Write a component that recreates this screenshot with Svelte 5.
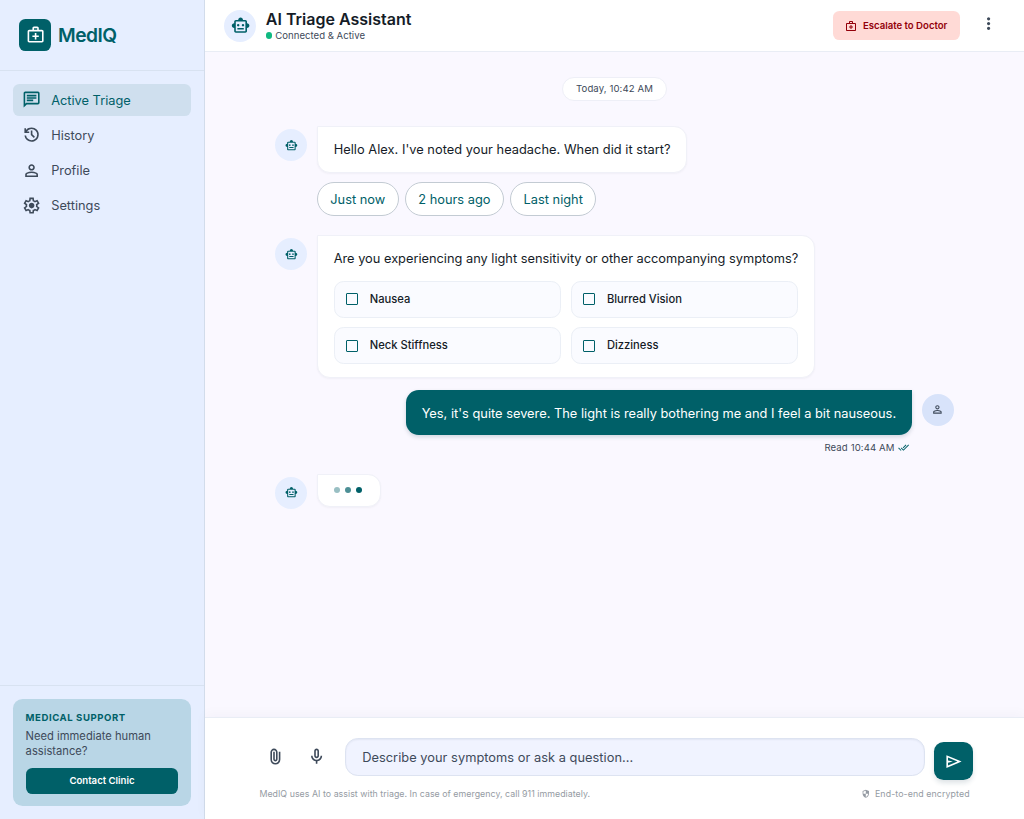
<script>
	const icons = {
		medical:
			'M4 22q-.825 0-1.412-.587T2 20V8q0-.825.588-1.412T4 6h4V4q0-.825.588-1.412T10 2h4q.825 0 1.413.588T16 4v2h4q.825 0 1.413.588T22 8v12q0 .825-.587 1.413T20 22zm0-2h16V8H4zm6-14h4V4h-4zm1 9v3h2v-3h3v-2h-3v-3h-2v3H8v2z',
		chat: 'M4 4h16v12H5.17L4 17.17V4m0-2c-1.1 0-1.99.9-1.99 2L2 22l4-4h14c1.1 0 2-.9 2-2V4c0-1.1-.9-2-2-2H4zm2 10h8v2H6v-2zm0-3h12v2H6V9zm0-3h12v2H6V6z',
		history:
			'M12 21q-3.45 0-6.01-2.29T3.05 13H5.1q.35 2.6 2.31 4.3T12 19q2.93 0 4.96-2.04T19 12t-2.04-4.96T12 5q-1.73 0-3.23.8T6.25 8H9v2H3V4h2v2.35q1.28-1.6 3.11-2.48T12 3q1.88 0 3.51.71t2.85 1.93 1.93 2.85T21 12t-.71 3.51-1.93 2.85-2.85 1.93T12 21m2.8-4.8L11 12.4V7h2v4.6l3.2 3.2z',
		person:
			'M12 12q-1.65 0-2.825-1.175T8 8t1.175-2.825T12 4t2.825 1.175T16 8t-1.175 2.825T12 12m-8 8v-2.8q0-.85.438-1.562T5.6 14.55q1.55-.775 3.15-1.162T12 13t3.25.388 3.15 1.162q.725.375 1.163 1.088T20 17.2V20zm2-2h12v-.8q0-.275-.137-.5t-.363-.35q-1.35-.675-2.725-1.012T12 15t-2.775.338T6.5 16.35q-.225.125-.363.35T6 17.2zm6-8q.825 0 1.413-.587T14 8t-.587-1.412T12 6t-1.412.588T10 8t.588 1.413T12 10',
		settings:
			'm9.25 22-.4-3.2q-.325-.125-.612-.3t-.563-.375L4.7 19.375l-2.75-4.75 2.575-1.95Q4.5 12.5 4.5 12.338v-.675q0-.163.025-.338L1.95 9.375l2.75-4.75 2.975 1.25q.275-.2.575-.375t.6-.3l.4-3.2h5.5l.4 3.2q.325.125.613.3t.562.375l2.975-1.25 2.75 4.75-2.575 1.95q.025.175.025.338v.674q0 .163-.05.338l2.575 1.95-2.75 4.75-2.95-1.25q-.275.2-.575.375t-.6.3l-.4 3.2zM11 20h1.975l.35-2.65q.775-.2 1.438-.587t1.212-.938l2.475 1.025.975-1.7-2.15-1.625q.125-.35.175-.737T17.5 12t-.05-.787-.175-.738l2.15-1.625-.975-1.7-2.475 1.05q-.55-.575-1.212-.962t-1.438-.588L13 4h-1.975l-.35 2.65q-.775.2-1.437.588t-1.213.937L5.55 7.15l-.975 1.7 2.15 1.6q-.125.375-.175.75t-.05.8q0 .4.05.775t.175.75l-2.15 1.625.975 1.7 2.475-1.05q.55.575 1.213.963t1.437.587zm1.05-4.5q1.45 0 2.475-1.025T15.55 12t-1.025-2.475T12.05 8.5q-1.475 0-2.487 1.025T8.55 12t1.013 2.475T12.05 15.5',
		robot: 'M4 15q-1.25 0-2.125-.875T1 12t.875-2.125T4 9V7q0-.825.588-1.412T6 5h3q0-1.25.875-2.125T12 2t2.125.875T15 5h3q.825 0 1.413.588T20 7v2q1.25 0 2.125.875T23 12t-.875 2.125T20 15v4q0 .825-.587 1.413T18 21H6q-.825 0-1.412-.587T4 19zm5-2q.625 0 1.063-.437T10.5 11.5t-.437-1.062T9 10t-1.062.438T7.5 11.5t.438 1.063T9 13m6 0q.625 0 1.063-.437T16.5 11.5t-.437-1.062T15 10t-1.062.438T13.5 11.5t.438 1.063T15 13m-7 4h8v-2H8zm-2 2h12V7H6z',
		more: 'M12 20q-.825 0-1.412-.587T10 18t.588-1.412T12 16t1.413.588T14 18t-.587 1.413T12 20m0-6q-.825 0-1.412-.587T10 12t.588-1.412T12 10t1.413.588T14 12t-.587 1.413T12 14m0-6q-.825 0-1.412-.587T10 6t.588-1.412T12 4t1.413.588T14 6t-.587 1.413T12 8',
		doneAll:
			'M18 7l-1.41-1.41-6.34 6.34 1.41 1.41L18 7zm4.24-1.41L11.66 16.17 7.48 12l-1.41 1.41L11.66 19l12-12-1.42-1.41zM.41 13.41 6 19l1.41-1.41L1.83 12 .41 13.41z',
		attach:
			'M18 15.75q0 2.6-1.825 4.425T11.75 22t-4.425-1.825T5.5 15.75V6.5q0-1.875 1.313-3.187T10 2t3.188 1.313T14.5 6.5v8.75q0 1.15-.8 1.95t-1.95.8-1.95-.8-.8-1.95V6h2v9.25q0 .325.213.538t.537.212.538-.213.212-.537V6.5q-.025-1.05-.737-1.775T10 4t-1.775.725T7.5 6.5v9.25q-.025 1.775 1.225 3.013T11.75 20q1.75 0 2.975-1.237T16 15.75V6h2z',
		mic: 'M12 14q-1.25 0-2.125-.875T9 11V5q0-1.25.875-2.125T12 2t2.125.875T15 5v6q0 1.25-.875 2.125T12 14m-1 7v-3.075q-2.6-.35-4.3-2.325T5 11h2q0 2.075 1.463 3.538T12 16t3.538-1.463T17 11h2q0 2.625-1.7 4.6T13 17.925V21zm1-9q.425 0 .713-.288T13 11V5q0-.425-.288-.712T12 4t-.712.288T11 5v6q0 .425.288.713T12 12',
		send: 'M3 20V4l19 8zm2-3 11.85-5L5 7v3.5l6 1.5-6 1.5z',
		shield: 'M12 22q-3.475-.875-5.738-3.988T4 11.1V5l8-3 8 3v6.1q0 3.8-2.262 6.913T12 22m0-2.1q2.425-.75 4.05-2.963T17.95 12H12V4.125l-6 2.25v5.175q0 .175.05.45H12z'
	};

	const nav = [
		{ label: 'Active Triage', icon: 'chat' },
		{ label: 'History', icon: 'history' },
		{ label: 'Profile', icon: 'person' },
		{ label: 'Settings', icon: 'settings' }
	];
	const replies = ['Just now', '2 hours ago', 'Last night'];
	const symptoms = ['Nausea', 'Blurred Vision', 'Neck Stiffness', 'Dizziness'];

	let active = $state('Active Triage');
	let checked = $state({});
	let message = $state('');
</script>

{#snippet icon(name, size)}
	<svg class="icon" width={size} height={size} viewBox="0 0 24 24" aria-hidden="true">
		<path d={icons[name]} />
	</svg>
{/snippet}

<div class="app">
	<aside class="sidebar">
		<div class="brand">
			<span class="logo">{@render icon('medical', 19.2)}</span>
			<span class="brand-name">MedIQ</span>
		</div>
		<nav>
			{#each nav as item}
				<button class="nav-item" class:active={active === item.label} onclick={() => (active = item.label)}>
					{@render icon(item.icon, 19.2)}
					<span>{item.label}</span>
				</button>
			{/each}
		</nav>
		<div class="sidebar-footer">
			<div class="support">
				<h2>MEDICAL SUPPORT</h2>
				<p>Need immediate human assistance?</p>
				<button class="contact">Contact Clinic</button>
			</div>
		</div>
	</aside>

	<main>
		<header>
			<span class="avatar large">{@render icon('robot', 19.2)}</span>
			<div class="heading">
				<h1>AI Triage Assistant</h1>
				<p class="status"><span class="status-dot"></span>Connected & Active</p>
			</div>
			<button class="escalate">{@render icon('medical', 12)}Escalate to Doctor</button>
			<button class="more" aria-label="More options">{@render icon('more', 19.2)}</button>
		</header>

		<section class="chat">
			<div class="date">Today, 10:42 AM</div>

			<div class="row first">
				<span class="avatar">{@render icon('robot', 12.8)}</span>
				<div class="stack">
					<div class="bubble greeting">Hello Alex. I've noted your headache. When did it start?</div>
					<div class="replies">
						{#each replies as reply}
							<button class="chip">{reply}</button>
						{/each}
					</div>
				</div>
			</div>

			<div class="row second">
				<span class="avatar">{@render icon('robot', 12.8)}</span>
				<div class="bubble question">
					<p>Are you experiencing any light sensitivity or other accompanying symptoms?</p>
					<div class="options">
						{#each symptoms as symptom}
							<label class="option">
								<input type="checkbox" bind:checked={checked[symptom]} />
								<span>{symptom}</span>
							</label>
						{/each}
					</div>
				</div>
			</div>

			<div class="row user">
				<div class="stack end">
					<div class="bubble mine">
						Yes, it's quite severe. The light is really bothering me and I feel a bit nauseous.
					</div>
					<div class="read">Read 10:44 AM {@render icon('doneAll', 11.2)}</div>
				</div>
				<span class="avatar me">{@render icon('person', 12.8)}</span>
			</div>

			<div class="row typing-row">
				<span class="avatar">{@render icon('robot', 12.8)}</span>
				<div class="bubble typing"><i></i><i></i><i></i></div>
			</div>
		</section>

		<footer>
			<div class="composer">
				<button class="tool" aria-label="Attach file">{@render icon('attach', 19.2)}</button>
				<button class="tool mic" aria-label="Voice input">{@render icon('mic', 19.2)}</button>
				<input
					class="message"
					type="text"
					placeholder="Describe your symptoms or ask a question..."
					bind:value={message}
				/>
				<button class="send" aria-label="Send">{@render icon('send', 19.2)}</button>
			</div>
			<div class="notes">
				<span>MedIQ uses AI to assist with triage. In case of emergency, call 911 immediately.</span>
				<span class="secure">{@render icon('shield', 9.6)}End-to-end encrypted</span>
			</div>
		</footer>
	</main>
</div>

<style>
	:global(body) {
		margin: 0;
		overflow: hidden;
	}

	.app {
		display: flex;
		height: 819px;
		font-family: Inter, 'Liberation Sans', sans-serif;
		font-size: 12.8px;
		line-height: 19.2px;
		color: #151c27;
		background: #faf8ff;
	}

	.app * {
		box-sizing: border-box;
	}

	h1,
	h2,
	p {
		margin: 0;
	}

	button {
		display: flex;
		align-items: center;
		padding: 0;
		border: 0;
		background: none;
		font: inherit;
		color: inherit;
		white-space: nowrap;
		cursor: pointer;
	}

	.icon {
		display: block;
		flex: none;
		fill: currentColor;
	}

	/* Sidebar */
	.sidebar {
		display: flex;
		flex-direction: column;
		width: 205px;
		flex: none;
		background: #e6eeff;
		border-right: 1px solid #d2dceb;
	}

	.brand {
		display: flex;
		align-items: center;
		gap: 6.8px;
		height: 71px;
		padding: 0 19.2px;
		border-bottom: 1px solid #d8e2f1;
	}

	.logo {
		display: grid;
		place-items: center;
		width: 32px;
		height: 32px;
		border-radius: 6.4px;
		background: #006068;
		color: #fff;
	}

	.brand-name {
		padding-top: 1px;
		font-size: 19.2px;
		font-weight: 600;
		letter-spacing: -0.5px;
		color: #006068;
	}

	nav {
		display: flex;
		flex-direction: column;
		gap: 3.2px;
		padding: 12.8px;
		flex: 1;
	}

	.nav-item {
		gap: 9.6px;
		height: 32px;
		padding: 0 9.6px;
		border-radius: 6.4px;
		color: #3e4a5a;
	}

	.nav-item span {
		padding-top: 1.2px;
	}

	.nav-item.active {
		background: #cfdfee;
		color: #006068;
	}

	.sidebar-footer {
		padding: 12.8px;
		border-top: 1px solid #d8e2f1;
	}

	.support {
		height: 107px;
		padding: 12.8px;
		border-radius: 9.6px;
		background: #b9d6e6;
	}

	.support h2 {
		font-size: 9.6px;
		line-height: 12.8px;
		font-weight: 700;
		letter-spacing: 0.55px;
		color: #006068;
	}

	.support p {
		margin: 4px 0 8.4px;
		font-size: 11.2px;
		line-height: 15.4px;
		color: #3e4a5a;
	}

	.contact {
		justify-content: center;
		width: 100%;
		height: 25.6px;
		padding-bottom: 1px;
		border-radius: 6.4px;
		background: #006068;
		color: #fff;
		font-size: 9.6px;
		font-weight: 600;
	}

	/* Header */
	main {
		display: flex;
		flex-direction: column;
		flex: 1;
		min-width: 0;
	}

	header {
		display: flex;
		align-items: center;
		height: 52px;
		padding: 0 25.6px 0 19.2px;
		background: #fff;
		border-bottom: 1px solid #e9edf5;
	}

	.avatar {
		display: grid;
		place-items: center;
		width: 32px;
		height: 32px;
		flex: none;
		margin-top: 3.2px;
		border-radius: 50%;
		background: #e6eeff;
		color: #006068;
	}

	.avatar.large {
		margin: 0 9.6px 0 0;
	}

	.heading {
		flex: 1;
	}

	h1 {
		font-size: 16px;
		line-height: 20px;
		font-weight: 600;
	}

	.status {
		display: flex;
		align-items: center;
		gap: 3.2px;
		font-size: 9.6px;
		line-height: 14px;
		color: #3e4a5a;
	}

	.status-dot {
		width: 6.4px;
		height: 6.4px;
		border-radius: 50%;
		background: #10b981;
	}

	.escalate {
		gap: 6px;
		height: 29px;
		padding: 0 12.8px 0 12.4px;
		border-radius: 6.4px;
		background: #ffdad6;
		color: #93000a;
		font-size: 9.6px;
		font-weight: 600;
	}

	.more {
		margin: -4px 0 0 19px;
		color: #3e4a5a;
	}

	/* Conversation */
	.chat {
		display: flex;
		flex-direction: column;
		flex: 1;
		width: 678.4px;
		margin: 0 auto;
		padding-top: 25px;
	}

	.date {
		align-self: center;
		padding: 0 12.8px;
		border: 1px solid #eeeff7;
		border-radius: 12px;
		background: #fff;
		font-size: 9.6px;
		line-height: 22px;
		letter-spacing: 0.1px;
		color: #3e4a5a;
	}

	.row {
		display: flex;
		align-items: flex-start;
		gap: 9.6px;
	}

	.first {
		margin-top: 25.2px;
	}

	.second {
		margin-top: 19.2px;
	}

	.bubble {
		width: fit-content;
		padding: 12.8px 15.8px;
		border: 1px solid #f0f1f8;
		border-radius: 0 12.8px 12.8px 12.8px;
		background: #fff;
		box-shadow: 0 1px 2px rgba(20, 30, 60, 0.04);
		white-space: nowrap;
	}

	.greeting {
		letter-spacing: 0.035px;
	}

	.replies {
		display: flex;
		gap: 6.4px;
		margin-top: 8.8px;
	}

	.chip {
		height: 34px;
		padding: 1px 12.4px 0;
		border: 1px solid #c3cbd3;
		border-radius: 17px;
		background: #fff;
		color: #006068;
	}

	.options {
		display: grid;
		grid-template-columns: 1fr 1fr;
		gap: 9.6px;
		margin-top: 12.8px;
	}

	.option {
		display: flex;
		align-items: center;
		gap: 11.5px;
		height: 36.8px;
		padding: 0 11.6px;
		border: 1px solid #ebeff6;
		border-radius: 9.6px;
		background: #fafbff;
		font-size: 11.2px;
		font-weight: 500;
	}

	.option input {
		appearance: none;
		width: 12px;
		height: 12px;
		margin: 0;
		border: 1.5px solid #006068;
		border-radius: 1px;
	}

	.option input:checked {
		background: #006068;
	}

	.user {
		justify-content: flex-end;
		margin-top: 12.6px;
	}

	.end {
		display: flex;
		flex-direction: column;
		align-items: flex-end;
	}

	.mine {
		padding: 13.2px 16px 12.4px;
		border: 0;
		border-radius: 12.8px 0 12.8px 12.8px;
		background: #006068;
		color: #fff;
		letter-spacing: 0.015px;
		box-shadow: 0 2px 4px rgba(20, 60, 80, 0.18);
	}

	.avatar.me {
		background: #d8e3fa;
		color: #3e4a5a;
	}

	.read {
		display: flex;
		align-items: center;
		gap: 3.2px;
		margin: 6.4px 3.2px 0 0;
		font-size: 9.6px;
		line-height: 12.8px;
		letter-spacing: 0.1px;
		color: #3e4a5a;
	}

	.read .icon {
		color: #006068;
	}

	.typing-row {
		margin-top: 19.2px;
	}

	.typing {
		display: flex;
		align-items: center;
		gap: 4.8px;
		height: 33px;
		padding-right: 17.2px;
	}

	.typing i {
		width: 6.4px;
		height: 6.4px;
		border-radius: 50%;
		background: #006068;
	}

	.typing i:nth-child(1) {
		opacity: 0.4;
	}

	.typing i:nth-child(2) {
		opacity: 0.7;
	}

	/* Composer */
	footer {
		height: 101.6px;
		padding: 19.6px 51.2px 0 54.4px;
		background: #fff;
		border-top: 1px solid #e9edf5;
		box-shadow: 0 -3px 12px rgba(20, 30, 60, 0.03);
	}

	.composer {
		display: flex;
		align-items: flex-start;
	}

	.tool {
		justify-content: center;
		width: 32px;
		height: 38px;
		color: #3e4a5a;
	}

	.mic {
		margin-left: 9.6px;
	}

	.message {
		flex: 1;
		height: 38px;
		margin: 0 9.6px 0 12.2px;
		padding: 0 16px;
		border: 1px solid #dde3f1;
		border-radius: 12.8px;
		background: #f0f3ff;
		box-shadow: inset 0 1px 2px rgba(20, 30, 60, 0.06);
		font: inherit;
		letter-spacing: 0.04px;
		color: inherit;
		outline: none;
	}

	.message::placeholder {
		color: #3e4a5a;
		opacity: 1;
	}

	.send {
		justify-content: center;
		width: 38.4px;
		height: 38.4px;
		margin-top: 4px;
		border-radius: 9.6px;
		background: #006068;
		color: #fff;
		box-shadow: 0 3px 5px rgba(20, 60, 80, 0.14);
	}

	.notes {
		display: flex;
		justify-content: space-between;
		margin-top: 7.4px;
		padding-right: 3.2px;
		font-size: 8.8px;
		line-height: 12.8px;
		letter-spacing: 0.04px;
		color: #959ba3;
	}

	.secure {
		display: flex;
		align-items: center;
		gap: 4.8px;
		letter-spacing: 0.1px;
	}
</style>
